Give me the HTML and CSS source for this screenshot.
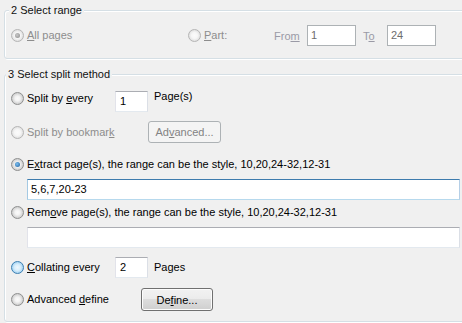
FILE: index.html
```html
<!DOCTYPE html>
<html>
<head>
<meta charset="utf-8">
<link rel="stylesheet" href="styles.css">
</head>
<body>
<fieldset class="group group-range">
  <legend class="legend legend-range">2 Select range</legend>
  <div class="range-row">
    <div class="opt disabled"><span class="radio checked"></span><span class="lbl"><u>A</u>ll pages</span></div>
    <div class="opt disabled"><span class="radio"></span><span class="lbl"><u>P</u>art:</span></div>
    <span class="dis-lbl">Fro<u>m</u></span>
    <div class="cell"><div class="textbox small-range dis-box">1</div></div>
    <span class="dis-lbl">T<u>o</u></span>
    <div class="textbox small-range dis-box">24</div>
  </div>
</fieldset>

<fieldset class="group group-split">
  <legend class="legend legend-split">3 Select split method</legend>

  <div class="row row-every">
    <div class="opt w-every"><span class="radio"></span><span class="lbl">Split by <u>e</u>very</span></div>
    <div class="textbox num">1</div>
    <span class="after-lbl pages-s">Page(s)</span>
  </div>

  <div class="row row-bookmark">
    <div class="opt w-bookmark disabled"><span class="radio dis"></span><span class="lbl">Split by bookmar<u>k</u></span></div>
    <div class="button btn-adv btn-dis">Ad<u>v</u>anced...</div>
  </div>

  <div class="row row-extract">
    <div class="opt"><span class="radio checked-blue"></span><span class="lbl">E<u>x</u>tract page(s), the range can be the style, 10,20,24-32,12-31</span></div>
  </div>
  <div class="textbox wide focus extract-box">5,6,7,20-23</div>

  <div class="row row-remove">
    <div class="opt"><span class="radio"></span><span class="lbl">Rem<u>o</u>ve page(s), the range can be the style, 10,20,24-32,12-31</span></div>
  </div>
  <div class="textbox wide remove-box"></div>

  <div class="row row-collate">
    <div class="opt w-every"><span class="radio hover"></span><span class="lbl"><u>C</u>ollating every</span></div>
    <div class="textbox num">2</div>
    <span class="after-lbl">Pages</span>
  </div>

  <div class="row row-define">
    <div class="opt w-define"><span class="radio"></span><span class="lbl">Advanced <u>d</u>efine</span></div>
    <div class="button btn-define">De<u>f</u>ine...</div>
  </div>
</fieldset>
</body>
</html>
```
FILE: styles.css
```css
html, body {
  margin: 0;
  padding: 0;
  background: #f0f0f0;
  overflow: hidden;
  width: 462px;
  height: 323px;
}
body {
  font-family: "Liberation Sans", Arial, sans-serif;
  font-size: 11px;
  color: #000;
}
u { text-decoration: underline; text-underline-offset: 1px; }

.group {
  margin: 0 0 0 4px;
  padding: 0 0 0 6px;
  width: 480px;
  border: 1px solid #d5dfe5;
  border-radius: 3px;
  box-shadow: inset 1px 1px 0 #fff, 1px 1px 0 #fff;
  box-sizing: border-box;
  min-width: 0;
}
.group-range { margin-top: 4px; padding-top: 8px; padding-bottom: 12px; }
.group-split { margin-top: 9px; padding-top: 0; padding-bottom: 10px; }

.legend {
  padding: 0 2px;
  line-height: 13px;
  height: 13px;
  background: #f0f0f0;
  color: #111;
}
.legend-range { margin-left: -2px; }
.legend-split { margin-left: -5px; }

.range-row {
  display: grid;
  grid-template-columns: 177px 86px 33px 56px 24px 49px;
  align-items: center;
  height: 21px;
}
.cell { display: flex; }

.opt {
  display: flex;
  align-items: center;
  height: 13px;
  line-height: 13px;
  white-space: nowrap;
}
.lbl { margin-left: 3px; }
.disabled .lbl { color: #8d8d8d; }
.dis-lbl { color: #9a9aa6; }

.radio {
  width: 13px;
  height: 13px;
  box-sizing: border-box;
  border-radius: 50%;
  border: 1px solid #8e8f8f;
  background: radial-gradient(circle at 50% 50%, #fbfbfb 0, #f3f3f3 2.5px, #cfcfcf 5.5px);
  position: relative;
  flex: none;
}
.radio.dis, .disabled .radio {
  border-color: #b5b5b5;
  background: radial-gradient(circle at 50% 50%, #fbfbfb 0, #f6f6f6 3px, #e2e2e2 5.5px);
}
.radio.checked::after, .radio.checked-blue::after {
  content: "";
  position: absolute;
  left: 3px;
  top: 3px;
  width: 5px;
  height: 5px;
  border-radius: 50%;
}
.radio.checked::after {
  background: radial-gradient(circle at 40% 40%, #c8c8c8, #8a8a8a);
}
.radio.checked-blue::after {
  background: radial-gradient(circle at 40% 40%, #7cc0f2, #1b5c99);
}
.radio.hover {
  border-color: #3c7fb1;
  background: radial-gradient(circle at 50% 50%, #eef7fd 0, #d8eefb 3px, #a9d5f3 5.5px);
}

.textbox {
  box-sizing: border-box;
  height: 21px;
  line-height: 19px;
  padding: 0 3px;
  background: #fff;
  border: 1px solid;
  border-color: #abadb3 #dbdfe6 #e3e9ef #e2e3ea;
  white-space: nowrap;
}
.small-range { width: 49px; }
.dis-box { border-color: #adb2b5; color: #6d6d6d; }
.num { width: 33px; padding-left: 4px; }
.wide { width: 433px; margin-left: 16px; }
.focus { border-color: #3d7bad #b5cfe7 #b7d9ed #a4c9e3; }

.row {
  display: flex;
  white-space: nowrap;
}
.w-every { width: 104px; }
.w-bookmark { width: 137px; }
.w-define { width: 130px; }

.row-every { margin-top: 10px; height: 21px; align-items: flex-start; }
.row-every .opt { margin-top: 1px; }
.after-lbl { margin-left: 6px; line-height: 13px; }
.pages-s { margin-top: -1px; }

.row-bookmark { margin-top: 9px; height: 22px; align-items: center; }
.row-extract { margin-top: 15px; }
.extract-box { margin-top: 8px; }
.row-remove { margin-top: 6px; }
.remove-box { margin-top: 8px; }
.row-collate { margin-top: 9px; height: 21px; align-items: center; }
.row-define { margin-top: 10px; height: 23px; align-items: center; }

.button {
  box-sizing: border-box;
  display: flex;
  align-items: center;
  justify-content: center;
  border-radius: 3px;
  border: 1px solid #707070;
  background: linear-gradient(#f2f2f2 0%, #ebebeb 50%, #dddddd 50%, #cfcfcf 100%);
  box-shadow: inset 0 0 0 1px #fcfcfc;
}
.btn-adv { width: 73px; height: 22px; }
.btn-define { width: 72px; height: 23px; }
.btn-dis {
  border-color: #adb2b5;
  background: #f4f4f4;
  box-shadow: none;
  color: #838383;
}
```
